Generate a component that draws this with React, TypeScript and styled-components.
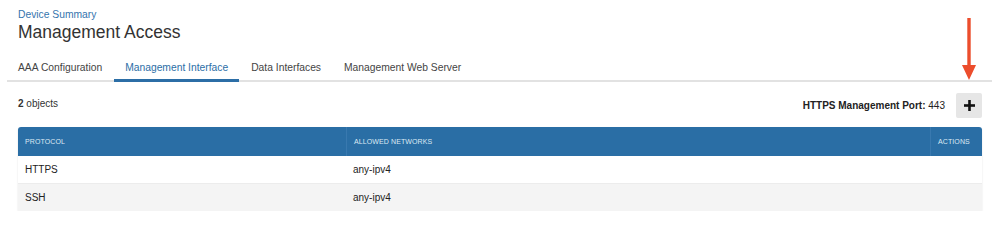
import React from "react";
import styled, { createGlobalStyle } from "styled-components";

const Global = createGlobalStyle`
  html, body { margin: 0; padding: 0; background: #fff; }
  body { font-family: "Liberation Sans", Arial, Helvetica, sans-serif; color: #333; }
`;

const Page = styled.div`
  position: relative;
  padding: 8px 5px 0 7px;
  width: 997px;
  box-sizing: border-box;
`;

const Header = styled.div`
  padding-left: 11px;
`;

const Breadcrumb = styled.div`
  font-size: 10.3px;
  line-height: 13px;
  color: #3574ad;
`;

const Title = styled.h1`
  margin: 0;
  font-size: 17.5px;
  line-height: 23px;
  font-weight: 400;
  color: #333;
`;

const TabBar = styled.div`
  margin-top: 12px;
  display: flex;
  gap: 1px;
  border-bottom: 2px solid #e2e2e2;
  height: 24px;
`;

const Tab = styled.div<{ $active?: boolean }>`
  font-size: 10.3px;
  line-height: 24px;
  padding: 0 11px;
  color: ${(p) => (p.$active ? "#2c6ea6" : "#444")};
  position: relative;
  &::after {
    content: "";
    position: absolute;
    left: 0;
    right: 0;
    bottom: -2px;
    height: 3px;
    background: ${(p) => (p.$active ? "#2c6ea6" : "transparent")};
  }
`;

const Content = styled.div`
  padding: 0 10px 0 11px;
`;

const Toolbar = styled.div`
  margin-top: 10px;
  height: 26px;
  display: flex;
  align-items: center;
  justify-content: space-between;
`;

const Count = styled.div`
  font-size: 10px;
  line-height: 12px;
  margin-top: -2px;
  color: #333;
  b { font-weight: 700; }
`;

const Right = styled.div`
  display: flex;
  align-items: center;
  gap: 11px;
`;

const Port = styled.div`
  font-size: 10px;
  color: #222;
  b { font-weight: 700; }
`;

const AddButton = styled.button`
  width: 26px;
  height: 25px;
  border: none;
  border-radius: 2px;
  background: #e6e6e6;
  display: flex;
  align-items: center;
  justify-content: center;
  padding: 0;
`;

const Table = styled.div`
  margin-top: 9px;
  border-radius: 3px 3px 0 0;
  overflow: hidden;
  box-shadow: 0 1px 2px rgba(0, 0, 0, 0.12);
`;

const Row = styled.div<{ $kind: "head" | "odd" | "even" }>`
  display: grid;
  grid-template-columns: 328px 584px 52px;
  height: ${(p) => (p.$kind === "head" ? "29px" : "27px")};
  background: ${(p) =>
    p.$kind === "head" ? "#2a6ea5" : p.$kind === "odd" ? "#ffffff" : "#f4f4f4"};
  border-bottom: ${(p) => (p.$kind === "odd" ? "1px solid #ececec" : "none")};
`;

const HeadCell = styled.div<{ $divider?: boolean }>`
  display: flex;
  align-items: center;
  padding-left: 7px;
  font-size: 7px;
  letter-spacing: 0.1px;
  color: #dde9f3;
  text-transform: uppercase;
  border-left: ${(p) => (p.$divider ? "1px solid #3979af" : "none")};
`;

const Cell = styled.div`
  display: flex;
  align-items: center;
  padding-left: 7px;
  font-size: 10px;
  color: #222;
`;

const Arrow = styled.svg`
  position: absolute;
  left: 962px;
  top: 18px;
`;

export default function App() {
  return (
    <>
      <Global />
      <Page>
        <Header>
          <Breadcrumb>Device Summary</Breadcrumb>
          <Title>Management Access</Title>
        </Header>
        <TabBar>
          <Tab>AAA Configuration</Tab>
          <Tab $active>Management Interface</Tab>
          <Tab>Data Interfaces</Tab>
          <Tab>Management Web Server</Tab>
        </TabBar>
        <Content>
          <Toolbar>
            <Count>
              <b>2</b> objects
            </Count>
            <Right>
              <Port>
                <b>HTTPS Management Port:</b> 443
              </Port>
              <AddButton aria-label="Add">
                <svg width="11" height="11" viewBox="0 0 11 11">
                  <rect x="4.2" y="0" width="2.6" height="11" fill="#111" />
                  <rect x="0" y="4.2" width="11" height="2.6" fill="#111" />
                </svg>
              </AddButton>
            </Right>
          </Toolbar>
          <Table>
            <Row $kind="head">
              <HeadCell>Protocol</HeadCell>
              <HeadCell $divider>Allowed Networks</HeadCell>
              <HeadCell $divider>Actions</HeadCell>
            </Row>
            <Row $kind="odd">
              <Cell>HTTPS</Cell>
              <Cell>any-ipv4</Cell>
              <Cell />
            </Row>
            <Row $kind="even">
              <Cell>SSH</Cell>
              <Cell>any-ipv4</Cell>
              <Cell />
            </Row>
          </Table>
        </Content>
        <Arrow width="14" height="63" viewBox="0 0 14 63">
          <rect x="5.3" y="0" width="3.4" height="50" fill="#ec4d2c" />
          <polygon points="0,47 14,47 7,62" fill="#ec4d2c" />
        </Arrow>
      </Page>
    </>
  );
}
